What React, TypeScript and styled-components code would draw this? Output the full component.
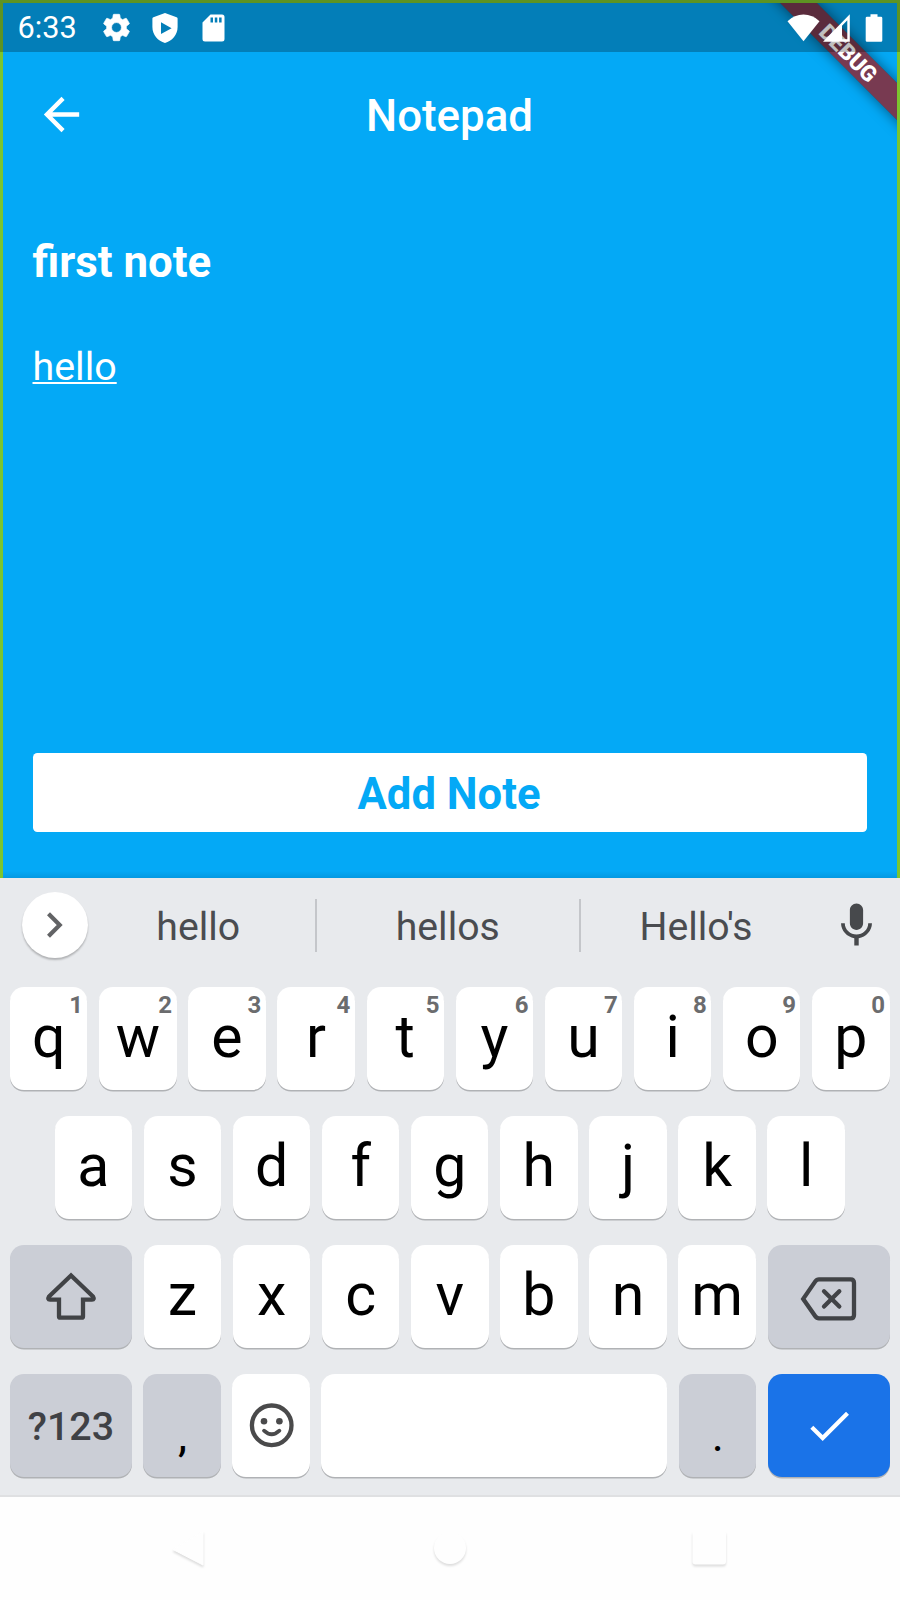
import React from "react";
import styled, { createGlobalStyle, css } from "styled-components";

const GlobalStyle = createGlobalStyle`
  *, *::before, *::after { box-sizing: border-box; }
  body { margin: 0; background: #fefefe; font-family: Roboto, "Liberation Sans", sans-serif; }
  button { font: inherit; border: 0; padding: 0; margin: 0; background: none; }
  svg { display: block; flex: none; }
`;

const Screen = styled.div`
  width: 900px;
  height: 1600px;
  display: flex;
  flex-direction: column;
  background: #fefefe;
  overflow: hidden;
`;

const AppArea = styled.main`
  position: relative;
  height: 877.5px;
  flex: none;
  display: flex;
  flex-direction: column;
  background: linear-gradient(to bottom, transparent calc(100% - 7px), rgba(0, 40, 80, 0.12)), #04a9f6;
  border: 3px solid #7cc52e;
  border-bottom: 0;
  color: #fff;
`;

const StatusBar = styled.header`
  position: absolute;
  z-index: 2;
  inset: -3px -3px auto;
  height: 52.4px;
  padding: 3px 17px 0 17.5px;
  display: flex;
  align-items: center;
  background: rgba(0, 0, 0, 0.25);
`;

const Clock = styled.span`
  width: 82.5px;
  font-size: 30.7px;
  line-height: 36px;
  padding-top: 1px;
`;

const StatusGroup = styled.div<{ $end?: boolean }>`
  display: flex;
  align-items: center;
  margin-left: ${(p) => (p.$end ? "auto" : 0)};
`;

const IconSlot = styled.div<{ $before: number; $after?: number }>`
  margin: 0 ${(p) => p.$after ?? 0}px 0 ${(p) => p.$before}px;
`;

const BannerClip = styled.div`
  position: absolute;
  z-index: 1;
  top: 0;
  right: 0;
  width: 160px;
  height: 160px;
  overflow: hidden;
`;

const DebugBanner = styled.div`
  position: absolute;
  left: 0;
  top: 36.5px;
  width: 223px;
  height: 26px;
  transform: rotate(45deg);
  background: rgba(168, 12, 12, 0.71);
  box-shadow: 0 0 13px rgba(0, 0, 0, 0.5);
  text-align: center;
  font-size: 22.3px;
  font-weight: 900;
  line-height: 26px;
`;

const AppBar = styled.div`
  margin-top: 49px;
  height: 125px;
  display: grid;
  grid-template-columns: 110px 1fr 111px;
  align-items: center;
`;

const BackButton = styled.button`
  margin-left: 31.5px;
  width: 53px;
  color: #fff;
`;

const Title = styled.h1`
  margin: 0;
  padding: 2px 0 0;
  text-align: center;
  font-size: 43.8px;
  font-weight: 500;
  line-height: 52px;
`;

const Note = styled.section`
  flex: 1;
  padding: 59px 29.5px 0;
`;

const NoteTitle = styled.h2`
  margin: 0;
  font-size: 43.8px;
  font-weight: 700;
  line-height: 52px;
`;

const NoteText = styled.p`
  margin: 55px 0 0;
  font-size: 39.4px;
  line-height: 48px;
`;

const Composing = styled.span`
  text-decoration: underline;
  text-decoration-thickness: 2px;
  text-underline-offset: 2px;
`;

const AddButton = styled.button`
  margin: 0 29.6px 46px 29.6px;
  height: 78.8px;
  flex: none;
  border-radius: 4.4px;
  background: #fff;
  color: #04a9f6;
  font-size: 43.6px;
  font-weight: 700;
  line-height: 78px;
  padding: 3px 2px 0 0;
`;

const Keyboard = styled.section`
  height: 619.5px;
  flex: none;
  background: #e8eaed;
  border-bottom: 2px solid #dfe0e2;
`;

const SuggestionBar = styled.div`
  height: 109.5px;
  padding: 0 17px 14px 21.5px;
  display: flex;
  align-items: center;
`;

const ExpandButton = styled.button`
  width: 66px;
  height: 66px;
  border-radius: 50%;
  display: flex;
  align-items: center;
  justify-content: center;
  background: #fff;
  box-shadow: 0 2px 2px rgba(0, 0, 0, 0.24);
`;

const Suggestion = styled.span<{ $width: number; $inset?: number; $divided?: boolean }>`
  width: ${(p) => p.$width}px;
  height: 53px;
  padding: 2px ${(p) => p.$inset ?? 0}px 0 0;
  text-align: center;
  font-size: 39.2px;
  line-height: 53px;
  color: #4a4c50;
  border-right: ${(p) => (p.$divided ? "2px solid #c4c6ca" : "0")};
`;

const MicButton = styled.button`
  margin-left: auto;
`;

const KeyRows = styled.div`
  display: flex;
  flex-direction: column;
  gap: 26.4px;
  padding: 0 10.4px 0 10px;
`;

const KeyRow = styled.div<{ $inset?: boolean }>`
  display: flex;
  justify-content: space-between;
  gap: 11.6px;
  height: 102.7px;
  padding: 0 ${(p) => (p.$inset ? 44.6 : 0)}px;
`;

type Tone = "light" | "grey" | "blue";
const tones: Record<Tone, string> = { light: "#fff", grey: "#cbced6", blue: "#1a73e8" };

const Key = styled.button<{ $tone?: Tone; $span?: "wide" | "fill" }>`
  position: relative;
  height: 102.7px;
  display: flex;
  justify-content: center;
  border-radius: 14px;
  background: ${(p) => tones[p.$tone ?? "light"]};
  box-shadow: 0 1.6px 0 #b0b2b5;
  color: #000;
  ${(p) =>
    p.$span === "fill"
      ? css`flex: 1;`
      : css`flex: 0 0 ${p.$span === "wide" ? 121.8 : 77.45}px;`}
`;

const Letter = styled.span`
  font-size: 59px;
  line-height: 99px;
`;

const Mark = styled.span`
  font-size: 46px;
  line-height: 122px;
  padding-left: 1px;
`;

const SymbolLabel = styled.span`
  font-size: 39.4px;
  font-weight: 500;
  line-height: 105px;
  color: #3f4145;
`;

const Hint = styled.span`
  position: absolute;
  top: 4px;
  right: 4.5px;
  font-size: 24px;
  font-weight: 700;
  line-height: 28px;
  color: #6b6c6e;
`;

const NavBar = styled.nav`
  flex: 1;
  display: flex;
  justify-content: space-between;
  padding: 31px 172px 0 170px;
  svg { filter: drop-shadow(0 2px 1px rgba(0, 0, 0, 0.13)); }
`;

const LetterKey = ({ char, hint }: { char: string; hint?: string }) => (
  <Key>
    <Letter>{char}</Letter>
    {hint && <Hint>{hint}</Hint>}
  </Key>
);

const GearIcon = () => (
  <svg width="33" height="33" viewBox="0 0 24 24" fill="#fff">
    <path d="M19.14 12.94c.04-.3.06-.61.06-.94 0-.32-.02-.64-.07-.94l2.03-1.58a.49.49 0 0 0 .12-.61l-1.92-3.32a.488.488 0 0 0-.59-.22l-2.39.96c-.5-.38-1.03-.7-1.62-.94l-.36-2.54a.484.484 0 0 0-.48-.41h-3.84c-.24 0-.43.17-.47.41l-.36 2.54c-.59.24-1.13.57-1.62.94l-2.39-.96c-.22-.08-.47 0-.59.22L2.74 8.87c-.12.21-.08.47.12.61l2.03 1.58c-.05.3-.09.63-.09.94s.02.64.07.94l-2.03 1.58a.49.49 0 0 0-.12.61l1.92 3.32c.12.22.37.29.59.22l2.39-.96c.5.38 1.03.7 1.62.94l.36 2.54c.05.24.24.41.48.41h3.84c.24 0 .44-.17.47-.41l.36-2.54c.59-.24 1.13-.56 1.62-.94l2.39.96c.22.08.47 0 .59-.22l1.92-3.32c.12-.22.07-.47-.12-.61l-2.01-1.58zM12 15.6A3.6 3.6 0 1 1 12 8.4a3.6 3.6 0 0 1 0 7.2z" stroke="#fff" strokeWidth=".5" />
  </svg>
);

const ShieldIcon = () => (
  <svg width="26" height="30" viewBox="0 0 26 30" fill="#fff" fillRule="evenodd">
    <path d="M13 0 24.6 4.2Q25.6 4.6 25.6 5.6V14C25.6 22 20 28 13 30 6 28 .4 22 .4 14V5.6Q.4 4.6 1.4 4.2ZM9 9.3V21L19.6 15.2Z" />
  </svg>
);

const SdCardIcon = () => (
  <svg width="23" height="28" viewBox="0 0 23 28" fill="#fff" fillRule="evenodd">
    <path d="M8.5.5H20Q22.5.5 22.5 3V25Q22.5 27.5 20 27.5H3Q.5 27.5.5 25V8.5ZM8.5 3.5V8.5H11V3.5ZM12.8 3.5V8.5H15.3V3.5ZM17.1 3.5V8.5H19.6V3.5Z" />
  </svg>
);

const WifiIcon = () => (
  <svg width="33" height="28" viewBox="0 0 33 28" fill="#fff">
    <path d="M16.5 27.3.5 7.2Q7.5.6 16.5.6T32.5 7.2Z" />
  </svg>
);

const SignalIcon = () => (
  <svg width="27" height="28" viewBox="0 0 27 28" fill="#fff" fillRule="evenodd">
    <path d="M26.8.3V27.7H0ZM24.3 6.3 19 11.7V25.2H24.3Z" />
  </svg>
);

const BatteryIcon = () => (
  <svg width="18" height="28" viewBox="0 0 18 28" fill="#fff">
    <path d="M5.5.2H12.5V2.8H16Q17.3 2.8 17.3 4.1V26.4Q17.3 27.7 16 27.7H2Q.7 27.7.7 26.4V4.1Q.7 2.8 2 2.8H5.5Z" />
  </svg>
);

const topRow = "qwertyuiop".split("");
const homeRow = "asdfghjkl".split("");
const bottomRow = "zxcvbnm".split("");

export default function App() {
  return (
    <Screen>
      <GlobalStyle />
      <AppArea>
        <StatusBar>
          <Clock>6:33</Clock>
          <StatusGroup>
            <GearIcon />
            <IconSlot $before={19}>
              <ShieldIcon />
            </IconSlot>
            <IconSlot $before={23.5}>
              <SdCardIcon />
            </IconSlot>
          </StatusGroup>
          <StatusGroup $end>
            <WifiIcon />
            <IconSlot $before={3} $after={15}>
              <SignalIcon />
            </IconSlot>
            <BatteryIcon />
          </StatusGroup>
        </StatusBar>
        <BannerClip>
          <DebugBanner>DEBUG</DebugBanner>
        </BannerClip>
        <AppBar>
          <BackButton aria-label="Back">
            <svg width="53" height="53" viewBox="0 0 24 24" fill="currentColor">
              <path d="M20 11H7.83l5.59-5.59L12 4l-8 8 8 8 1.41-1.41L7.83 13H20v-2z" />
            </svg>
          </BackButton>
          <Title>Notepad</Title>
        </AppBar>
        <Note>
          <NoteTitle>first note</NoteTitle>
          <NoteText>
            <Composing>hello</Composing>
          </NoteText>
        </Note>
        <AddButton>Add Note</AddButton>
      </AppArea>

      <Keyboard>
        <SuggestionBar>
          <ExpandButton aria-label="More">
            <svg width="18" height="28" viewBox="0 0 18 28" fill="none" stroke="#626365" strokeWidth="4.2">
              <path d="M2.5 2.7 13.7 14 2.5 25.3" />
            </svg>
          </ExpandButton>
          <Suggestion $width={229.5} $inset={6} $divided>
            hello
          </Suggestion>
          <Suggestion $width={263.5} $divided>
            hellos
          </Suggestion>
          <Suggestion $width={231}>Hello's</Suggestion>
          <MicButton aria-label="Voice input">
            <svg width="53" height="53" viewBox="0 0 24 24" fill="#47494c">
              <path d="M12 14c1.66 0 2.99-1.34 2.99-3L15 5c0-1.66-1.34-3-3-3S9 3.34 9 5v6c0 1.66 1.34 3 3 3zm5.3-3c0 3-2.54 5.1-5.3 5.1S6.7 14 6.7 11H5c0 3.41 2.72 6.23 6 6.72V21h2v-3.28c3.28-.48 6-3.3 6-6.72h-1.7z" />
            </svg>
          </MicButton>
        </SuggestionBar>
        <KeyRows>
          <KeyRow>
            {topRow.map((c, i) => (
              <LetterKey key={c} char={c} hint={String((i + 1) % 10)} />
            ))}
          </KeyRow>
          <KeyRow $inset>
            {homeRow.map((c) => (
              <LetterKey key={c} char={c} />
            ))}
          </KeyRow>
          <KeyRow>
            <Key $tone="grey" $span="wide" aria-label="Shift">
              <svg width="122" height="103" viewBox="0 0 122 103" fill="none" stroke="#414346" strokeWidth="4.3">
                <path d="M61 30.5 39 51.5Q37.2 54.7 40 54.7H49V71.5Q49 72.7 50.2 72.7H71.8Q73 72.7 73 71.5V54.7H82Q84.8 54.7 83 51.5Z" />
              </svg>
            </Key>
            {bottomRow.map((c) => (
              <LetterKey key={c} char={c} />
            ))}
            <Key $tone="grey" $span="wide" aria-label="Delete">
              <svg width="122" height="103" viewBox="0 0 122 103" fill="none" stroke="#414346" strokeWidth="4.3" strokeLinecap="round">
                <path d="M51 34.3H82.5Q86 34.3 86 37.8V69.9Q86 73.4 82.5 73.4H51Q48.7 73.4 47.3 71.3L35.2 53.9 47.3 36.4Q48.7 34.3 51 34.3Z" />
                <path d="M56 46.3 71.3 61.6M71.3 46.3 56 61.6" />
              </svg>
            </Key>
          </KeyRow>
          <KeyRow>
            <Key $tone="grey" $span="wide">
              <SymbolLabel>?123</SymbolLabel>
            </Key>
            <Key $tone="grey">
              <Mark>,</Mark>
            </Key>
            <Key aria-label="Emoji">
              <svg width="77" height="103" viewBox="0 0 77 103" fill="none" stroke="#4a4a4b" strokeWidth="4.3" strokeLinecap="round">
                <circle cx="38.7" cy="51.3" r="19.8" />
                <path d="M31 56.7Q38.7 64 46.4 56.7" strokeWidth="3.8" />
                <g fill="#4a4a4b" stroke="none">
                  <circle cx="31" cy="47.2" r="3.3" />
                  <circle cx="46.4" cy="47.2" r="3.3" />
                </g>
              </svg>
            </Key>
            <Key $span="fill" aria-label="Space" />
            <Key $tone="grey">
              <Mark>.</Mark>
            </Key>
            <Key $tone="blue" $span="wide" aria-label="Done">
              <svg width="122" height="103" viewBox="0 0 122 103" fill="none" stroke="#fff" strokeWidth="4.2">
                <path d="M43.8 53.2 54.7 64 79.5 39.2" />
              </svg>
            </Key>
          </KeyRow>
        </KeyRows>
      </Keyboard>

      <NavBar>
        <svg width="38" height="46" viewBox="0 0 38 46" fill="#fefefe">
          <path d="M3 21.5 33 3.5V37Z" stroke="#fefefe" strokeLinejoin="round" />
        </svg>
        <svg width="38" height="46" viewBox="0 0 38 46" fill="#fefefe">
          <circle cx="20" cy="20" r="16" />
        </svg>
        <svg width="38" height="46" viewBox="0 0 38 46" fill="#fefefe">
          <rect x="2.5" y="3" width="33.5" height="33.5" rx="3" />
        </svg>
      </NavBar>
    </Screen>
  );
}
